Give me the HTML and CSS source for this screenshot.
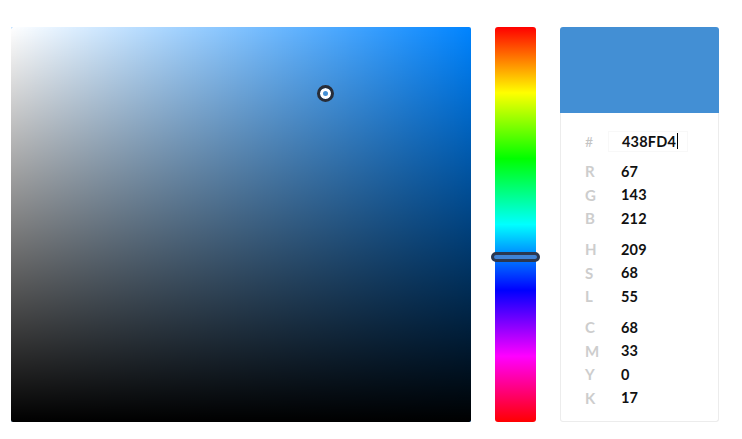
FILE: index.html
```html
<!DOCTYPE html>
<html lang="en">
<head>
<meta charset="utf-8">
<title>Color Picker</title>
<link rel="stylesheet" href="styles.css">
</head>
<body>
<div class="picker">
  <div class="saturation">
    <div class="sat-white"></div>
    <div class="sat-black"></div>
    <div class="sat-pointer"></div>
  </div>
  <div class="hue">
    <div class="hue-handle"></div>
  </div>
  <div class="side">
    <div class="swatch"></div>
    <div class="info">
      <div class="row hex-row">
        <span class="label hash">#</span>
        <span class="hex-box"><span class="value">438FD4</span><span class="caret"></span></span>
      </div>
      <div class="group">
        <div class="row"><span class="label">R</span><span class="value">67</span></div>
        <div class="row"><span class="label">G</span><span class="value">143</span></div>
        <div class="row"><span class="label">B</span><span class="value">212</span></div>
      </div>
      <div class="group">
        <div class="row"><span class="label">H</span><span class="value">209</span></div>
        <div class="row"><span class="label">S</span><span class="value">68</span></div>
        <div class="row"><span class="label">L</span><span class="value">55</span></div>
      </div>
      <div class="group">
        <div class="row"><span class="label">C</span><span class="value">68</span></div>
        <div class="row"><span class="label">M</span><span class="value">33</span></div>
        <div class="row"><span class="label">Y</span><span class="value">0</span></div>
        <div class="row"><span class="label">K</span><span class="value">17</span></div>
      </div>
    </div>
  </div>
</div>
</body>
</html>
```
FILE: styles.css
```css
* { box-sizing: border-box; }
html, body { margin: 0; padding: 0; background: #fff; }
body { font-family: Lato, "Open Sans", sans-serif; }

.picker {
  display: flex;
  padding: 27px 0 0 11px;
  gap: 24px;
}

.saturation {
  position: relative;
  width: 460px;
  height: 395px;
  border-radius: 2px;
  overflow: hidden;
  background: rgb(0, 132, 255);
}
.sat-white {
  position: absolute; inset: 0;
  background: linear-gradient(to right, #fff, rgba(255,255,255,0));
}
.sat-black {
  position: absolute; inset: 0;
  background: linear-gradient(to bottom, rgba(0,0,0,0), #000);
}
.sat-pointer {
  position: absolute;
  left: 306px;
  top: 58px;
  width: 17px;
  height: 17px;
  border-radius: 50%;
  background: #438fd4;
  border: 3px solid #282d38;
  box-shadow: inset 0 0 0 3px #fff;
}

.hue {
  position: relative;
  width: 41px;
  height: 395px;
  border-radius: 3px;
  background: linear-gradient(to bottom,
    #ff0000 0%, #ffff00 16.67%, #00ff00 33.33%, #00ffff 50%,
    #0000ff 66.67%, #ff00ff 83.33%, #ff0000 100%);
}
.hue-handle {
  position: absolute;
  left: -4px;
  right: -4px;
  top: 225px;
  height: 10px;
  border-radius: 5px;
  border: 3px solid #2b3750;
  background: #3f82d6;
}

.side {
  width: 159px;
  display: flex;
  flex-direction: column;
}
.swatch {
  height: 86px;
  background: #438fd4;
  border-radius: 3px 3px 0 0;
}
.info {
  height: 309px;
  border: 1px solid #ececec;
  border-top: none;
  border-radius: 0 0 3px 3px;
  padding: 16px 0 0 24px;
  display: flex;
  flex-direction: column;
}
.group {
  display: flex;
  flex-direction: column;
  margin-top: 7.5px;
}
.hex-row + .group { margin-top: 6.25px; }

.row {
  display: flex;
  align-items: center;
  height: 23.5px;
}
.hex-row { height: 24px; }

.label {
  width: 36px;
  font-size: 15px;
  font-weight: 700;
  color: #cdcdcd;
}
.hash {
  font-weight: 400;
  color: #c4c4c4;
  font-size: 14px;
}
.value {
  font-size: 14.5px;
  font-weight: 700;
  color: #111;
  letter-spacing: 0.2px;
}
.hex-box {
  display: flex;
  align-items: center;
  margin-left: -13px;
  padding-left: 13px;
  width: 80px;
  height: 21px;
  border: 1px solid #f8f8f8;
}
.caret {
  display: inline-block;
  width: 1px;
  height: 16px;
  background: #000;
  margin-left: 1px;
}
```
